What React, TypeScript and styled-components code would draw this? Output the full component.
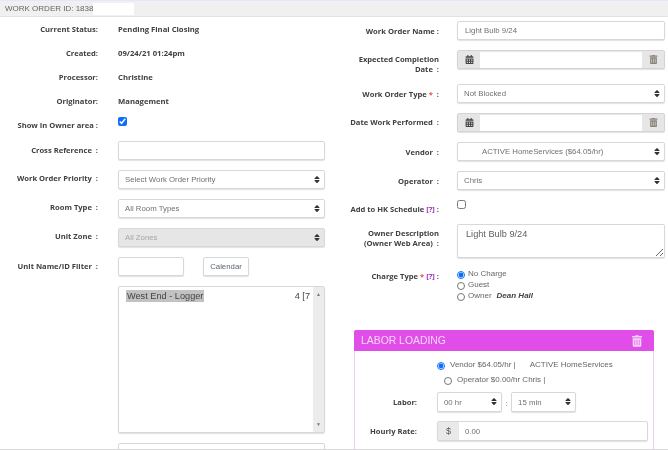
import { ReactNode } from 'react';
import { FaCalendarAlt, FaSort, FaTrashAlt } from 'react-icons/fa';
import styled, { createGlobalStyle } from 'styled-components';

const GlobalStyle = createGlobalStyle`
  html, body {
    margin: 0;
    background: #fff;
  }
`;

const Page = styled.div`
  width: 668px;
  height: 450px;
  box-sizing: border-box;
  overflow: hidden;
  border-bottom: 1px solid #d9d9d9;
  font-family: 'Open Sans', 'Liberation Sans', sans-serif;
  color: #3a3a3a;
  filter: blur(0.55px);
`;

const Header = styled.header`
  height: 17px;
  box-sizing: border-box;
  display: flex;
  align-items: center;
  padding-left: 5px;
  background: #f0f0f0;
  border-top: 1px solid #e3e7f7;
  border-bottom: 1px solid #e2e2e2;
  font: 8px 'Liberation Sans', sans-serif;
  color: #666;
`;

const HeaderId = styled.span`
  width: 88px;
  flex: none;
  white-space: nowrap;
`;

const HeaderMask = styled.span`
  width: 41px;
  height: 12px;
  background: #fff;
`;

const Columns = styled.div`
  display: flex;
`;

const LeftColumn = styled.section`
  width: 334px;
  flex: none;
  display: flex;
  flex-direction: column;
`;

const RightColumn = styled.section`
  width: 334px;
  flex: none;
  display: flex;
  flex-direction: column;
  padding-top: 4px;
`;

const FieldStack = styled.div`
  display: flex;
  flex-direction: column;
  gap: 10px;
  margin-top: 4px;
`;

const Row = styled.div<{ $side?: 'left' | 'right'; $height?: number; $top?: number }>`
  display: grid;
  grid-template-columns: ${({ $side }) => ($side === 'right' ? '105px 208px' : '98px 207px')};
  column-gap: ${({ $side }) => ($side === 'right' ? '18px' : '20px')};
  align-items: center;
  min-height: ${({ $height }) => $height ?? 19}px;
  margin-top: ${({ $top }) => $top ?? 0}px;
`;

const Label = styled.label<{ $startAt?: number; $lift?: number }>`
  font-size: 7.6px;
  font-weight: 700;
  line-height: 10px;
  text-align: right;
  color: #404040;
  padding-bottom: ${({ $lift }) => $lift ?? 0}px;
  ${({ $startAt }) =>
    $startAt !== undefined && `align-self: start; margin: ${$startAt}px 0 -20px;`}
`;

const Help = styled.span`
  color: #a52bc4;
`;

const Required = styled.span`
  color: #e05050;
`;

const Value = styled.span`
  font-size: 7.7px;
  font-weight: 700;
  color: #404040;
`;

const boxStyles = `
  box-sizing: border-box;
  height: 19px;
  border: 1px solid #d8d8d8;
  border-radius: 2px;
  box-shadow: 0 1px 1px rgba(0, 0, 0, 0.12);
  background: #fff;
  font: 7.8px 'Liberation Sans', sans-serif;
  color: #707070;
`;

const TextInput = styled.input<{ $width?: number }>`
  ${boxStyles}
  width: ${({ $width }) => ($width ? `${$width}px` : '100%')};
  padding: 0 7px;
  outline: none;
`;

const SelectWrap = styled.div<{ $width?: number }>`
  position: relative;
  width: ${({ $width }) => ($width ? `${$width}px` : '100%')};
`;

const NativeSelect = styled.select<{ $indent?: number; $height?: number }>`
  ${boxStyles}
  width: 100%;
  height: ${({ $height }) => $height ?? 19}px;
  display: block;
  appearance: none;
  padding: 0 14px 0 ${({ $indent }) => $indent ?? 6}px;
  outline: none;
  opacity: 1;
  &:disabled {
    background: #e6e6e6;
    color: #a5a5a5;
  }
`;

const SelectArrow = styled(FaSort)`
  position: absolute;
  right: 4px;
  top: 5px;
  width: 8px;
  height: 9px;
  color: #333;
  pointer-events: none;
`;

const DateGroup = styled.div`
  ${boxStyles}
  display: flex;
  overflow: hidden;
  border-color: #d4d4d4;
  box-shadow: inset 0 1px 1px rgba(0, 0, 0, 0.1), 0 1px 1px rgba(0, 0, 0, 0.12);
`;

const Addon = styled.span`
  width: 22px;
  flex: none;
  display: flex;
  align-items: center;
  justify-content: center;
  background: #e6e6e6;
  color: #444;
  font-size: 9px;
`;

const DateField = styled.span`
  flex: 1;
`;

const CheckBox = styled.input<{ $startAt: number }>`
  width: 9px;
  height: 9px;
  margin: ${({ $startAt }) => $startAt}px 0 0;
  align-self: start;
  accent-color: #0d6efd;
`;

const CalendarButton = styled.button`
  ${boxStyles}
  width: 46px;
  margin-left: 19px;
  padding: 0;
  color: #5c6670;
`;

const FilterCell = styled.div`
  display: flex;
`;

const ListBox = styled.div`
  ${boxStyles}
  height: 147px;
  display: flex;
  font-size: 9.2px;
  color: #444;
`;

const ListOptions = styled.div`
  flex: 1;
  display: flex;
  align-items: flex-start;
  justify-content: space-between;
  padding: 3px 3px 0 7px;
`;

const SelectedOption = styled.span`
  background: #c2c2c2;
  padding: 0 1px;
  line-height: 12px;
`;

const Clipped = styled.span`
  line-height: 12px;
`;

const ScrollBar = styled.div`
  width: 11px;
  display: flex;
  flex-direction: column;
  justify-content: space-between;
  align-items: center;
  padding: 5px 0;
  background: #ececec;
  color: #777;
  font-size: 5px;
  line-height: 5px;
`;

const TextArea = styled.textarea`
  ${boxStyles}
  width: 100%;
  height: 34px;
  display: block;
  padding: 4px 8px;
  font-size: 9.2px;
  color: #606060;
  resize: both;
  outline: none;
`;

const RadioStack = styled.div`
  display: flex;
  flex-direction: column;
`;

const RadioLine = styled.label<{ $indent?: number; $height?: number }>`
  display: flex;
  align-items: flex-start;
  height: ${({ $height }) => $height ?? 11}px;
  padding-left: ${({ $indent }) => $indent ?? 0}px;
  font: 8px/9px 'Liberation Sans', sans-serif;
  color: #666;
`;

const Radio = styled.input<{ $gap?: number }>`
  width: 8px;
  height: 8px;
  margin: 2px ${({ $gap }) => $gap ?? 3}px 0 0;
  accent-color: #0d6efd;
  flex: none;
`;

const OwnerName = styled.em`
  margin-left: 5px;
  font-weight: 700;
  color: #444;
`;

const VendorName = styled.span`
  margin-left: 14px;
`;

const Card = styled.section`
  width: 300px;
  margin: 28px 0 0 20px;
  box-sizing: border-box;
  height: 130px;
  border: 1px solid #f3c9f5;
  border-radius: 2px 2px 0 0;
`;

const CardHeader = styled.header`
  height: 21px;
  margin: -1px -1px 0;
  display: flex;
  align-items: center;
  justify-content: space-between;
  padding: 0 12px 0 7px;
  background: #e04de8;
  border-radius: 2px 2px 0 0;
  font: 10.4px 'Liberation Sans', sans-serif;
  color: #f8d8fa;
`;

const CardTrash = styled(FaTrashAlt)`
  width: 10px;
  height: 12px;
  color: #f8d8fa;
`;

const CardBody = styled.div`
  padding: 9px 5px 0 0;
  display: flex;
  flex-direction: column;
`;

const CardRadios = styled.div`
  padding-left: 82px;
  display: flex;
  flex-direction: column;
`;

const CardRow = styled.div<{ $top: number }>`
  display: grid;
  grid-template-columns: 62px 1fr;
  column-gap: 20px;
  align-items: center;
  margin-top: ${({ $top }) => $top}px;
`;

const TimeSelects = styled.div`
  display: flex;
  align-items: center;
  gap: 3.5px;
  color: #999;
  font-size: 8px;
`;

const MoneyGroup = styled.div`
  ${boxStyles}
  height: 20px;
  display: flex;
  align-items: stretch;
  overflow: hidden;
`;

const MoneyAddon = styled.span`
  width: 21px;
  display: flex;
  align-items: center;
  justify-content: center;
  background: #e9e9e9;
  color: #555;
  font-size: 9px;
`;

const MoneyValue = styled.span`
  display: flex;
  align-items: center;
  padding-left: 6px;
`;

function Select({ value, indent, disabled, width, height }: { value: string; indent?: number; disabled?: boolean; width?: number; height?: number }) {
  return (
    <SelectWrap $width={width}>
      <NativeSelect $indent={indent} $height={height} disabled={disabled} defaultValue={value}>
        <option>{value}</option>
      </NativeSelect>
      <SelectArrow />
    </SelectWrap>
  );
}

function DatePicker() {
  return (
    <DateGroup>
      <Addon>
        <FaCalendarAlt />
      </Addon>
      <DateField />
      <Addon>
        <FaTrashAlt color="#8a8478" />
      </Addon>
    </DateGroup>
  );
}

function InfoRow({ label, children }: { label: string; children: ReactNode }) {
  return (
    <Row $height={24}>
      <Label>{label}</Label>
      <Value>{children}</Value>
    </Row>
  );
}

export default function App() {
  return (
    <Page>
      <GlobalStyle />
      <Header>
        <HeaderId>WORK ORDER ID: 1838</HeaderId>
        <HeaderMask />
      </Header>
      <Columns>
        <LeftColumn>
          <InfoRow label="Current Status:">Pending Final Closing</InfoRow>
          <InfoRow label="Created:">09/24/21 01:24pm</InfoRow>
          <InfoRow label="Processor:">Christine</InfoRow>
          <InfoRow label="Originator:">Management</InfoRow>
          <Row $height={24}>
            <Label>Show In Owner area :</Label>
            <CheckBox type="checkbox" defaultChecked $startAt={4} />
          </Row>
          <FieldStack>
            <Row>
              <Label $lift={1}>Cross Reference &nbsp;:</Label>
              <TextInput />
            </Row>
            <Row>
              <Label $lift={3}>Work Order Priority &nbsp;:</Label>
              <Select value="Select Work Order Priority" />
            </Row>
            <Row>
              <Label $lift={3}>Room Type &nbsp;:</Label>
              <Select value="All Room Types" />
            </Row>
            <Row>
              <Label $lift={3}>Unit Zone &nbsp;:</Label>
              <Select value="All Zones" disabled />
            </Row>
            <Row>
              <Label $lift={2}>Unit Name/ID Filter &nbsp;:</Label>
              <FilterCell>
                <TextInput $width={66} />
                <CalendarButton>Calendar</CalendarButton>
              </FilterCell>
            </Row>
            <Row>
              <span />
              <ListBox>
                <ListOptions>
                  <SelectedOption>West End - Logger</SelectedOption>
                  <Clipped>4 [7</Clipped>
                </ListOptions>
                <ScrollBar>
                  <span>▲</span>
                  <span>▼</span>
                </ScrollBar>
              </ListBox>
            </Row>
            <Row>
              <span />
              <TextInput />
            </Row>
          </FieldStack>
        </LeftColumn>
        <RightColumn>
          <Row $side="right">
            <Label>Work Order Name :</Label>
            <TextInput defaultValue="Light Bulb 9/24" />
          </Row>
          <Row $side="right" $top={10}>
            <Label $startAt={4}>
              Expected Completion
              <br />
              Date &nbsp;:
            </Label>
            <DatePicker />
          </Row>
          <Row $side="right" $top={15}>
            <Label>
              Work Order Type <Required>*</Required> &nbsp;:
            </Label>
            <Select value="Not Blocked" />
          </Row>
          <Row $side="right" $top={10}>
            <Label $lift={1}>Date Work Performed &nbsp;:</Label>
            <DatePicker />
          </Row>
          <Row $side="right" $top={10}>
            <Label>Vendor &nbsp;:</Label>
            <Select value="ACTIVE HomeServices ($64.05/hr)" indent={24} />
          </Row>
          <Row $side="right" $top={10}>
            <Label>Operator &nbsp;:</Label>
            <Select value="Chris" />
          </Row>
          <Row $side="right" $top={7} $height={24}>
            <Label>
              Add to HK Schedule <Help>[?]</Help> :
            </Label>
            <CheckBox type="checkbox" $startAt={3} />
          </Row>
          <Row $side="right" $top={3}>
            <Label $startAt={4}>
              Owner Description
              <br />
              (Owner Web Area) &nbsp;:
            </Label>
            <TextArea defaultValue="Light Bulb 9/24" />
          </Row>
          <Row $side="right" $top={11}>
            <Label $startAt={2}>
              Charge Type <Required>*</Required> <Help>[?]</Help> :
            </Label>
            <RadioStack>
              <RadioLine>
                <Radio type="radio" name="charge" defaultChecked />
                No Charge
              </RadioLine>
              <RadioLine>
                <Radio type="radio" name="charge" />
                Guest
              </RadioLine>
              <RadioLine>
                <Radio type="radio" name="charge" />
                Owner <OwnerName>Dean Hall</OwnerName>
              </RadioLine>
            </RadioStack>
          </Row>
          <Card>
            <CardHeader>
              LABOR LOADING
              <CardTrash />
            </CardHeader>
            <CardBody>
              <CardRadios>
                <RadioLine $height={15}>
                  <Radio type="radio" name="labor" defaultChecked $gap={5} />
                  Vendor $64.05/hr | <VendorName>ACTIVE HomeServices</VendorName>
                </RadioLine>
                <RadioLine $indent={7} $height={12}>
                  <Radio type="radio" name="labor" $gap={5} />
                  Operator $0.00/hr Chris |
                </RadioLine>
              </CardRadios>
              <CardRow $top={5}>
                <Label>Labor:</Label>
                <TimeSelects>
                  <Select value="00 hr" width={65} height={20} />:
                  <Select value="15 min" width={65} height={20} />
                </TimeSelects>
              </CardRow>
              <CardRow $top={9}>
                <Label>Hourly Rate:</Label>
                <MoneyGroup>
                  <MoneyAddon>$</MoneyAddon>
                  <MoneyValue>0.00</MoneyValue>
                </MoneyGroup>
              </CardRow>
            </CardBody>
          </Card>
        </RightColumn>
      </Columns>
    </Page>
  );
}
